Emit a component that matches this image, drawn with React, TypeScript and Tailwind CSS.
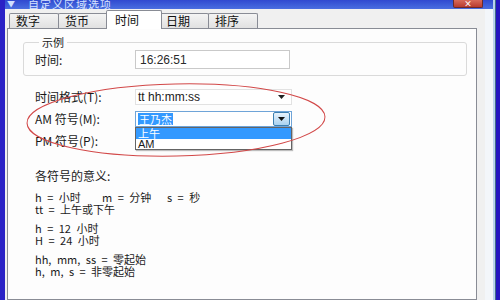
import React from 'react';

const FONT = '"Noto Sans CJK SC", "Liberation Sans", sans-serif';

const tabs = ['数字', '货币', '时间', '日期', '排序'];

const Tab: React.FC<{ label: string; active?: boolean; idx: number }> = ({ label, active, idx }) => {
  if (active) {
    return (
      <div className="-ml-[2px] -mr-[2px] w-[56px] h-[19px] bg-white border border-b-0 border-[#898c95] pl-[8px] pt-[2px] text-[12px] leading-[14px] text-[#111] relative z-10 rounded-t-[2px]">
        {label}
      </div>
    );
  }
  return (
    <div
      className={`${idx === 0 ? 'w-[50px]' : '-ml-px w-[50px]'} h-[15px] mb-px bg-gradient-to-b from-[#f4f4f4] to-[#e1e1e1] border border-b-0 border-[#898c95] pl-[6px] text-[12px] leading-[14px] text-[#111] rounded-t-[2px]`}
    >
      {label}
    </div>
  );
};

const Row: React.FC<{ label: string; children?: React.ReactNode; className?: string }> = ({ label, children, className }) => (
  <div className={`flex items-center h-[16px] ${className ?? ''}`}>
    <div className="w-[100px] text-[12px] leading-[14px] text-[#1a1a1a]">{label}</div>
    {children}
  </div>
);

const Line: React.FC<{ children: React.ReactNode }> = ({ children }) => (
  <div className="h-[12px] text-[11px] leading-[12px] text-[#1a1a1a] whitespace-pre [word-spacing:3px]">{children}</div>
);

export default function App() {
  return (
    <div className="relative w-[500px] h-[300px] flex overflow-hidden bg-[#2414c0]" style={{ fontFamily: FONT }}>
      <div className="w-[5px] bg-[#2a22c6]" />

      <div className="w-[488px] flex flex-col">
        {/* title bar, mostly cut off at the top */}
        <div className="h-[9px] bg-gradient-to-b from-[#3049d0] to-[#4a6ee0] flex items-end overflow-hidden relative">
          <span className="ml-[2px] mb-[1px] text-[#cfe0ff] text-[8px] leading-[8px]">▼</span>
          <span className="ml-[13px] -mb-[1px] text-[11px] leading-[11px] text-[#d6e2ff] tracking-[1px]">自定义区域选项</span>
          <div className="ml-auto mr-[10px] self-start w-[30px] h-[8px] bg-gradient-to-b from-[#d86a5a] to-[#b83a2e] border border-t-0 border-[#6b2a2a] rounded-b-[2px] flex items-center justify-center">
            <span className="text-white text-[8px] leading-[7px] font-bold">×</span>
          </div>
        </div>

        {/* body */}
        <div className="flex-1 flex">
          <div className="w-[480px] bg-[#f0f0f0] pl-[2px] pr-[8px] flex flex-col">
            <div className="flex items-end h-[19px] mt-px ml-[2px] relative z-10">
              {tabs.map((t, i) => (
                <Tab key={t} label={t} idx={i} active={t === '时间'} />
              ))}
            </div>

            <div className="relative -mt-px flex-1 bg-[#fdfdfd] border border-[#898c95] pl-[27px]">
              <fieldset className="-ml-[12px] mr-[9px] mt-[7px] border border-[#dadada] rounded-[3px] pl-[11px] pb-[6px]">
                <legend className="ml-[4px] px-[3px] text-[11px] leading-[12px] text-[#1a1a1a]">示例</legend>
                <div className="flex items-center mt-[2px]">
                  <div className="w-[100px] text-[12px] text-[#1a1a1a]">时间:</div>
                  <div className="w-[155px] h-[19px] border border-[#c9c9c9] bg-white pl-[4px] flex items-center">
                    <span className="text-[12px] leading-[12px] text-[#2a2a2a]" style={{ fontFamily: '"Liberation Sans", sans-serif' }}>
                      16:26:51
                    </span>
                  </div>
                </div>
              </fieldset>

              <Row label="时间格式(T):" className="mt-[13px]">
                <div className="w-[157px] h-[16px] border border-[#e2e2e2] bg-white flex items-center pl-[2px]">
                  <span className="flex-1 text-[12px] leading-[12px] text-[#1a1a1a]" style={{ fontFamily: '"Liberation Sans", sans-serif' }}>
                    tt hh:mm:ss
                  </span>
                  <svg width="7" height="4" viewBox="0 0 7 4" className="mr-[6px]">
                    <path d="M0 0 L7 0 L3.5 4 Z" fill="#222" />
                  </svg>
                </div>
              </Row>

              <Row label="AM 符号(M):" className="mt-[6px]">
                <div className="relative w-[157px] h-[16px] border border-[#6fa4d8] bg-white flex items-center pl-[2px]">
                  <span className="flex-1 flex">
                    <span className="bg-[#3399ff] text-white text-[11px] leading-[12px] px-px">王乃杰</span>
                  </span>
                  <div className="w-[17px] h-[14px] mr-px bg-gradient-to-b from-[#e6f2fc] to-[#a9d2f0] border border-[#3c7fb1] rounded-[2px] flex items-center justify-center">
                    <svg width="7" height="4" viewBox="0 0 7 4">
                      <path d="M0 0 L7 0 L3.5 4 Z" fill="#111" />
                    </svg>
                  </div>
                  {/* open dropdown list */}
                  <div className="absolute left-[-1px] top-[15px] w-[157px] border border-[#646464] bg-white z-20 shadow-[1px_1px_1px_rgba(0,0,0,0.25)]">
                    <div className="h-[11px] bg-[#3399ff] text-white text-[11px] leading-[11px] pl-[2px] overflow-hidden">上午</div>
                    <div className="h-[10px] text-[#1a1a1a] text-[11px] leading-[10px] pl-[2px] overflow-hidden" style={{ fontFamily: '"Liberation Sans", sans-serif' }}>
                      AM
                    </div>
                  </div>
                </div>
              </Row>

              <Row label="PM 符号(P):" className="mt-[6px]" />

              <div className="mt-[21px] h-[12px] text-[12px] leading-[12px] text-[#1a1a1a]">各符号的意义:</div>

              <div className="mt-[9px]">
                <div className="flex h-[12px] text-[11px] leading-[12px] text-[#1a1a1a] whitespace-pre [word-spacing:3px]">
                  <span className="w-[67px]">h = 小时</span>
                  <span className="w-[65px]">m = 分钟</span>
                  <span>s = 秒</span>
                </div>
                <Line>tt = 上午或下午</Line>
              </div>

              <div className="mt-[7px]">
                <Line>h = 12 小时</Line>
                <Line>H = 24 小时</Line>
              </div>

              <div className="mt-[7px]">
                <Line>hh, mm, ss = 零起始</Line>
                <Line>h, m, s = 非零起始</Line>
              </div>
            </div>
          </div>
          <div className="w-[8px] bg-[#f3f6fa]" />
        </div>
      </div>

      <div className="flex-1 flex">
        <div className="w-[2px] bg-[#bad2ee]" />
        <div className="w-px bg-[#3f6b86]" />
        <div className="flex-1 bg-[#2414c0]" />
      </div>

      {/* red hand-drawn ellipse marking */}
      <svg className="absolute inset-0 pointer-events-none z-30" width="500" height="300" viewBox="0 0 500 300">
        <ellipse cx="176" cy="120" rx="149" ry="36" fill="none" stroke="#d24848" strokeWidth="1" transform="rotate(-1.2 176 120)" />
      </svg>
    </div>
  );
}
